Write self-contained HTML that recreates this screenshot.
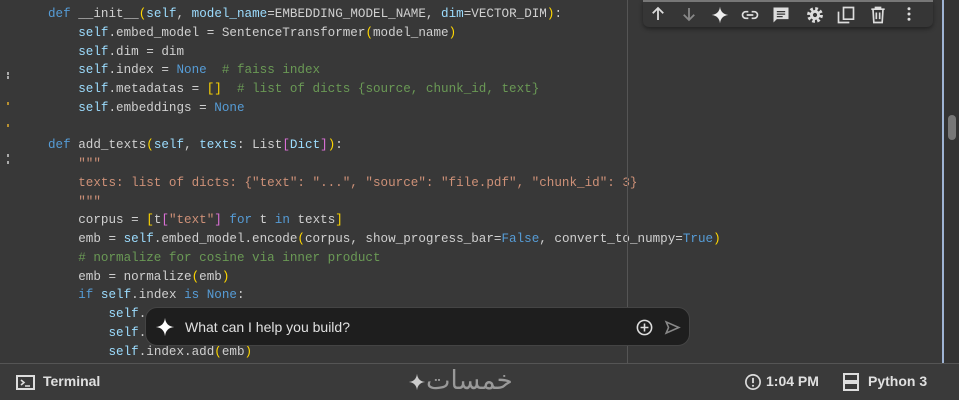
<!DOCTYPE html>
<html><head><meta charset="utf-8"><style>
*{margin:0;padding:0;box-sizing:border-box}
body{width:959px;height:400px;overflow:hidden;background:#383838;position:relative;font-family:"Liberation Sans",sans-serif}
.code{position:absolute;left:48px;top:5px;font-family:"Liberation Mono",monospace;font-size:12.6px;line-height:18.75px;color:#d0d0d0;white-space:pre}
.k{color:#569cd6}.s{color:#9cdcfe}.c{color:#6a9955}.str{color:#ce9178}.y{color:#ffd700}.p{color:#da70d6}.f{color:#d0d0d0}.n{color:#4fa0d8}
.ruler{position:absolute;left:627px;top:0;width:1px;height:363px;background:#555}
.vline{position:absolute;left:942px;top:0;width:2px;height:363px;background:#9fb4d4}
.sb{position:absolute;left:944px;top:0;width:15px;height:363px;background:#333}
.thumb{position:absolute;left:948px;top:115px;width:8px;height:25px;border-radius:4px;background:#777}
.tb{position:absolute;left:643px;top:0;width:290px;height:27px;background:#363636;border-top:2px solid #777;border-radius:0 0 6px 6px;box-shadow:0 2px 4px rgba(0,0,0,.4)}
.tb svg{position:absolute;top:3px}
.chat{position:absolute;left:145px;top:307px;width:545px;height:39px;background:#1e1e1e;border-radius:12px;border:1px solid #444}
.chat span{position:absolute;left:39px;top:11px;color:#e0e0e0;font-size:14px}
.bar{position:absolute;left:0;top:363px;width:959px;height:37px;background:#3a3a3a;border-top:1px solid #555;color:#e0e0e0;font-size:14px;font-weight:bold}
.bar .t{position:absolute;top:9px}
.mark{position:absolute;left:7px;width:2px;height:3px;background:#aaa}
</style></head><body>
<div class="code"><span class="k">def</span> <span class="f">__init__</span><span class="y">(</span><span class="s">self</span>, <span class="s">model_name</span>=EMBEDDING_MODEL_NAME, <span class="s">dim</span>=VECTOR_DIM<span class="y">)</span>:
    <span class="s">self</span>.embed_model = SentenceTransformer<span class="y">(</span>model_name<span class="y">)</span>
    <span class="s">self</span>.dim = dim
    <span class="s">self</span>.index = <span class="k">None</span>  <span class="c"># faiss index</span>
    <span class="s">self</span>.metadatas = <span class="y">[]</span>  <span class="c"># list of dicts {source, chunk_id, text}</span>
    <span class="s">self</span>.embeddings = <span class="k">None</span>

<span class="k">def</span> <span class="f">add_texts</span><span class="y">(</span><span class="s">self</span>, <span class="s">texts</span>: List<span class="p">[</span><span class="s">Dict</span><span class="p">]</span><span class="y">)</span>:
    <span class="str">"""</span>
<span class="str">    texts: list of dicts: {"text": "...", "source": "file.pdf", "chunk_id": 3}</span>
    <span class="str">"""</span>
    corpus = <span class="y">[</span>t<span class="p">[</span><span class="str">"text"</span><span class="p">]</span> <span class="k">for</span> t <span class="k">in</span> texts<span class="y">]</span>
    emb = <span class="s">self</span>.embed_model.encode<span class="y">(</span>corpus, show_progress_bar=<span class="k">False</span>, convert_to_numpy=<span class="k">True</span><span class="y">)</span>
    <span class="c"># normalize for cosine via inner product</span>
    emb = normalize<span class="y">(</span>emb<span class="y">)</span>
    <span class="k">if</span> <span class="s">self</span>.index <span class="k">is</span> <span class="k">None</span>:
        <span class="s">self</span>.
        <span class="s">self</span>.
        <span class="s">self</span>.index.add<span class="y">(</span>emb<span class="y">)</span></div>
<div class="mark" style="top:72px"></div><div class="mark" style="top:76px"></div>
<div class="mark" style="top:102px;background:#b89030"></div><div class="mark" style="top:124px;background:#b89030"></div>
<div class="mark" style="top:154px"></div><div class="mark" style="top:161px"></div>
<div class="ruler"></div><div class="sb"></div><div class="vline"></div><div class="thumb"></div>
<div class="tb">
<svg style="left:6px" width="18" height="18" viewBox="0 0 24 24"><path d="M12 20V5M5 11l7-7 7 7" stroke="#ddd" stroke-width="2.4" fill="none"/></svg>
<svg style="left:37px" width="18" height="18" viewBox="0 0 24 24"><path d="M12 4v15M5 13l7 7 7-7" stroke="#888" stroke-width="2.4" fill="none"/></svg>
<svg style="left:67px" width="20" height="20" viewBox="0 0 24 24"><path d="M12 2Q13 11 22 12Q13 13 12 22Q11 13 2 12Q11 11 12 2Z" fill="#eee"/></svg>
<svg style="left:97px" width="20" height="20" viewBox="0 0 24 24"><path d="M10 8H7a4 4 0 000 8h3M14 8h3a4 4 0 010 8h-3M8 12h8" stroke="#ddd" stroke-width="2" fill="none"/></svg>
<svg style="left:128px" width="20" height="20" viewBox="0 0 24 24"><path d="M3 3h18v14H7l-4 4z" fill="#ddd"/><path d="M7 8h10M7 11h10M7 14h7" stroke="#363636" stroke-width="1.5"/></svg>
<svg style="left:162px" width="20" height="20" viewBox="0 0 24 24"><circle cx="12" cy="12" r="7" fill="none" stroke="#ddd" stroke-width="5" stroke-dasharray="3 2.5"/><circle cx="12" cy="12" r="6" fill="#ddd"/><circle cx="12" cy="12" r="2.5" fill="#363636"/></svg>
<svg style="left:193px" width="20" height="20" viewBox="0 0 24 24"><path d="M9 3h12v14H9zM3 8v13h13" stroke="#ddd" stroke-width="2" fill="none"/></svg>
<svg style="left:225px" width="20" height="20" viewBox="0 0 24 24"><path d="M4 5h16M9 5V3h6v2M6 5l1 16h10l1-16M10 9v8M14 9v8" stroke="#ddd" stroke-width="2" fill="none"/></svg>
<svg style="left:257px" width="18" height="18" viewBox="0 0 24 24"><circle cx="12" cy="5" r="2" fill="#ddd"/><circle cx="12" cy="12" r="2" fill="#ddd"/><circle cx="12" cy="19" r="2" fill="#ddd"/></svg>
</div>
<div class="chat">
<svg style="position:absolute;left:9px;top:9px" width="20" height="20" viewBox="0 0 24 24"><path d="M12 1Q13 11 23 12Q13 13 12 23Q11 13 1 12Q11 11 12 1Z" fill="#fff"/></svg>
<span>What can I help you build?</span>
<svg style="position:absolute;left:489px;top:10px" width="19" height="19" viewBox="0 0 24 24"><circle cx="12" cy="12" r="9" stroke="#ddd" stroke-width="2" fill="none"/><path d="M12 7v10M7 12h10" stroke="#ddd" stroke-width="2"/></svg>
<svg style="position:absolute;left:517px;top:10px" width="19" height="19" viewBox="0 0 24 24"><path d="M4 5l16 7-16 7 3-7z" stroke="#888" stroke-width="2" fill="none"/></svg>
</div>
<div class="bar">
<svg style="position:absolute;left:16px;top:11px" width="19" height="15" viewBox="0 0 19 15"><rect x="1" y="1" width="17" height="13" fill="none" stroke="#ddd" stroke-width="2"/><path d="M5 5l3 2.5-3 2.5M9 11h5" stroke="#ddd" stroke-width="1.6" fill="none"/></svg>
<span class="t" style="left:43px">Terminal</span>
<svg style="position:absolute;left:408px;top:9px" width="18" height="18" viewBox="0 0 24 24"><path d="M12 1Q13 11 23 12Q13 13 12 23Q11 13 1 12Q11 11 12 1Z" fill="#ccc"/></svg>
<span class="t" style="left:426px;top:2px;font-size:26px;font-weight:normal;color:#999;font-family:'DejaVu Sans',sans-serif">خمسات</span>
<svg style="position:absolute;left:744px;top:9px" width="18" height="18" viewBox="0 0 24 24"><circle cx="12" cy="12" r="9.5" stroke="#ddd" stroke-width="2.2" fill="none"/><path d="M12 6.5v7" stroke="#ddd" stroke-width="2.4"/><circle cx="12" cy="17" r="1.4" fill="#ddd"/></svg>
<span class="t" style="left:766px">1:04 PM</span>
<svg style="position:absolute;left:843px;top:9px" width="16" height="18" viewBox="0 0 16 18"><rect x="1" y="1" width="14" height="7" fill="none" stroke="#ddd" stroke-width="2"/><rect x="1" y="10" width="14" height="7" fill="none" stroke="#ddd" stroke-width="2"/></svg>
<span class="t" style="left:868px">Python 3</span>
</div>
</body></html>
